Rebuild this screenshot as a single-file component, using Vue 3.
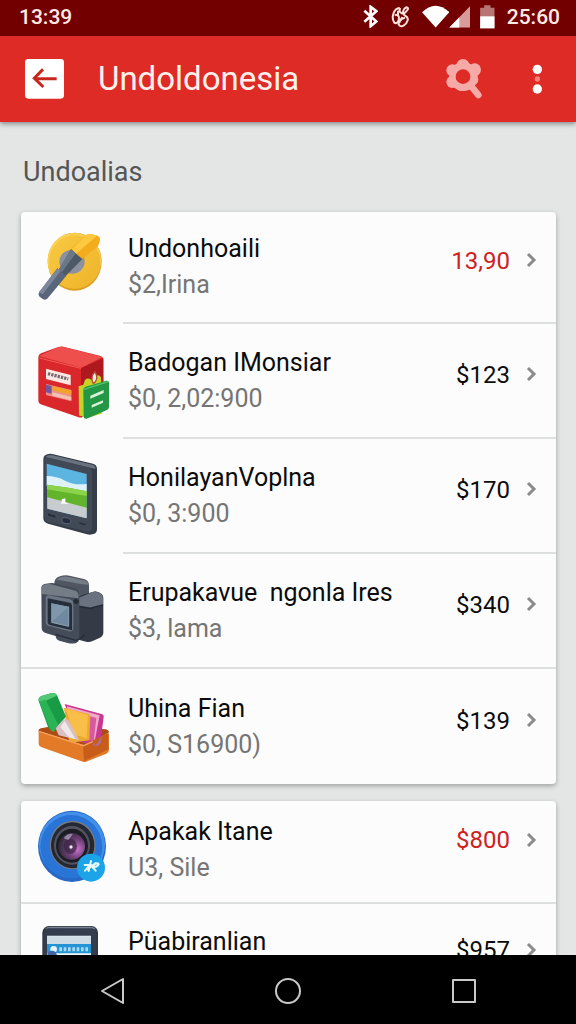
<template>
  <div class="screen">
    <div class="status-bar">
      <span class="clock">13:39</span>
      <div class="status-icons">
        <svg class="bluetooth" viewBox="234 14 45 68" width="15" height="23">
          <path d="M238 31l36 32-17 14V19l17 13-36 32" fill="none" stroke="#fff" stroke-width="8" />
        </svg>
        <svg class="sync" viewBox="318 14 57 66" width="19" height="22">
          <g fill="none" stroke="#ffe3df" stroke-width="6">
            <path d="M344 20c-19 1-26 30-16 44 7 5 14-5 14-14s-8-12-12-7" />
            <path d="M346 20c-8 13 7 21 15 13s10-11 6-14-14 5-13 16 18 7 14 22-20 23-26 14 5-19 18-22" />
            <path d="M339 28v17M352 47l-10 18" />
          </g>
        </svg>
        <svg class="wifi" viewBox="408 14 81 68" width="27" height="23">
          <path d="M408 35q40-39 82 0l-41 46z" fill="#fff" />
        </svg>
        <svg class="signal" viewBox="489 14 63 68" width="21" height="23">
          <path d="M552 17v64h-62z" fill="#d99a9a" />
          <path d="M520 50v31h-30z" fill="#fff" />
        </svg>
        <svg class="battery" viewBox="582 12 44 72" width="15" height="24">
          <path d="M582 20h12v-7h19v7h12v62h-43z" fill="#b87575" />
          <path d="M582 46h43v36h-43z" fill="#fff" />
        </svg>
        <span class="clock">25:60</span>
      </div>
    </div>

    <header class="app-bar">
      <button class="icon-btn" aria-label="Back">
        <svg viewBox="75 177 117 120" width="39" height="40">
          <rect x="75" y="177" width="117" height="119" rx="10" fill="#fff" />
          <path d="M170 236h-65M129 208l-26 27 27 26" fill="none" stroke="#c9251f" stroke-width="9" />
        </svg>
      </button>
      <h1>Undoldonesia</h1>
      <button class="icon-btn search" aria-label="Search">
        <svg viewBox="474 176 111 120" width="37" height="40">
          <g fill="#f6aaa7">
            <circle cx="526" cy="229" r="43" />
            <circle cx="525" cy="196" r="20" />
            <circle cx="560" cy="208" r="19" />
            <circle cx="493" cy="210" r="18" />
            <circle cx="493" cy="245" r="18" />
            <circle cx="520" cy="256" r="16" />
            <circle cx="554" cy="238" r="17" />
          </g>
          <path d="M546 253l25 31" stroke="#f6aaa7" stroke-width="20" stroke-linecap="round" />
          <circle cx="525" cy="229" r="22" fill="#de2b26" />
        </svg>
      </button>
      <button class="icon-btn" aria-label="More options">
        <svg viewBox="732 192 33 90" width="11" height="30">
          <circle cx="748" cy="208" r="14" fill="#fff" />
          <circle cx="748" cy="237" r="8" fill="#f8807c" />
          <circle cx="748" cy="267" r="14" fill="#fff" />
        </svg>
      </button>
    </header>

    <main class="content">
      <h2>Undoalias</h2>
      <section v-for="(card, index) in cards" :key="index" class="card">
        <a
          v-for="item in card"
          :key="item.title"
          href="#"
          class="row"
          :class="{ full: item.full }"
        >
          <svg class="thumb" viewBox="42 36 240 264" width="80" height="88" aria-hidden="true">
            <g v-if="item.icon === 'disc'" transform="translate(0 -3)">
              <ellipse cx="164" cy="152" rx="81" ry="87" fill="#dca01e" />
              <ellipse cx="163" cy="149" rx="80" ry="83" fill="#fbd255" />
              <ellipse cx="164" cy="153" rx="77" ry="80" fill="url(#gold)" />
              <ellipse cx="156" cy="152" rx="38" ry="36" fill="#8b919e" />
              <path d="M149 118l46-44q7-7 20-4l18 4q10 5 6 18l-5 14-52 42z" fill="#f3ac1c" />
              <path d="M156 114l42-41q7-6 19-3l14 4-47 41-16 14z" fill="#ffc93f" />
              <path d="M153 115l34 29-53 54-20-18z" fill="#4d5966" />
              <path d="M153 115l14 12-43 59-10-6z" fill="#6c7885" />
              <path d="M112 172l27 22-56 68q-6 7-15 2l-9-7q-6-6-1-14z" fill="#59657a" />
              <path d="M112 172l10 8-54 70-11-6z" fill="#7c879b" />
            </g>

            <g v-else-if="item.icon === 'box'">
              <path d="M55 94q0-9 8-12l52-19q8-3 15-1l112 28q8 3 8 11v120l-63 52q-4 3-11 1L62 235q-7-3-7-11z" fill="#d9272c" />
              <path d="M183 126l67-29v125l-67 52z" fill="#b01820" />
              <path d="M57 90l58-26q8-3 15-1l118 30-64 32z" fill="#ef4f4c" />
              <path d="M58 96l125 31" stroke="#f25b55" stroke-width="3" />
              <path d="M78 128l74 19v31l-74-19z" fill="#fbe9e4" />
              <path d="M84 143l61 16" stroke="#796973" stroke-width="10" stroke-dasharray="7 3" />
              <path d="M78 174l76 18v34l-76-19z" fill="#ef9088" />
              <path d="M97 180l57 13v14l-57-14z" fill="#f3a22c" />
              <path d="M78 176l17 4v23l-17-4z" fill="#74549b" />
              <path d="M97 199l57 14v10l-57-14z" fill="#f4c2b0" />
              <path d="M176 181l14-5 5-14q7-7 15-3l10 7 13-18q9 0 10 9l1 16 16 10-15 80-45 13-23-8z" fill="#c5d326" />
              <path d="M219 171c-7-16-2-26 6-34 8 14 8 24-2 34z" fill="#eef3e6" stroke="#b64b35" stroke-width="4" />
              <path d="M190 190q1-6 7-8l62-18q8-1 8 7v72q0 6-6 9l-61 26q-8 2-9-6z" fill="#239744" />
              <path d="M190 191l74-24" stroke="#57c568" stroke-width="4" />
              <path d="M211 209l40-17v9l-40 17zM215 237l34-14v7l-34 15z" fill="#d8f1d9" />
            </g>

            <g v-else-if="item.icon === 'phone'">
              <path d="M70 56q0-13 12-16 9-3 18 0l119 28q12 3 12 16v181q0 13-14 15-8 2-16 0L84 248q-14-4-14-16z" fill="#343b49" />
              <path d="M76 49q6-10 22-6l120 28q10 4 8 13z" fill="#697281" />
              <path d="M73 57q2-10 15-7l116 29q13 4 13 17v161q0 14-13 16L84 243q-11-4-11-15z" fill="#414957" />
              <path d="M80 68l120 31v133L82 203z" fill="#5cb5e1" />
              <path d="M80 105q30 0 55 14t65 10v30L80 135z" fill="#dff2fa" />
              <path d="M81 131q60 7 119 20v60L82 181z" fill="#62b52a" />
              <path d="M81 131q60 7 119 20v14q-60-10-119-20z" fill="#8bd348" />
              <path d="M82 169q60 16 118 31v32L82 203z" fill="#c7cdcf" />
              <path d="M125 182v-7l11-3v12l11 4h-24z" fill="#fff" />
              <ellipse cx="139" cy="239" rx="14" ry="9" fill="#242d3d" stroke="#697383" stroke-width="2" transform="rotate(12 139 239)" />
              <path d="M84 217l22 7v6l-22-6z" fill="#262e3c" />
              <path d="M178 246l19 5" stroke="#293241" stroke-width="5" />
            </g>

            <g v-else-if="item.icon === 'camera'">
              <path d="M103 84q0-15 17-20 14-5 29-2l45 11q13 4 13 19v35l-104-20z" fill="#505762" />
              <path d="M109 77q11-16 39-11l48 11q9 3 9 12l-18-1-70-13z" fill="#757d87" />
              <path d="M165 125l61-16q24 5 24 19v105q0 9-10 15l-24 11q-8 4-18 1l-33-9z" fill="#343b47" />
              <path d="M174 130l46-20q29 0 29 21v20l-42 10-33-7z" fill="#69727e" />
              <path d="M176 154l35 6 38-10" fill="none" stroke="#252c37" stroke-width="5" />
              <path d="M64 97q1-8 9-10l15-2q10-2 21 1l57 14q12 4 12 16v134q-1 12-12 15-11 2-23-1l-25-7q-10-3-11-14l-28-8q-14-4-14-17z" fill="#454c59" />
              <path d="M65 96q4-10 25-9l76 20q12 4 9 23l-109-13z" fill="#747c86" />
              <path d="M77 129q1-9 11-8l61 12q10 2 11 12v74q-1 12-12 10l-61-16q-10-3-10-12z" fill="#6b7482" />
              <path d="M83 130l67 13q6 1 6 9v74l-63-15q-10-2-10-10z" fill="#252e3b" />
              <path d="M94 145l52 10v59l-52-12z" fill="#7189a0" />
              <path d="M94 145l52 10-52 47z" fill="#7f97ab" />
              <path d="M94 202l52 12M146 155v59" stroke="#8fa3b2" stroke-width="3" />
              <circle cx="168" cy="139" r="8" fill="#262b34" />
              <path d="M106 238l61 18q17-4 27-18" fill="none" stroke="#262d38" stroke-width="4" />
            </g>

            <g v-else-if="item.icon === 'tray'">
              <path d="M55 181q0-7 8-9l41-8 153 11q10 3 10 9l-69 43z" fill="#ad4b15" />
              <path d="M134 99l113 31q5 2 4 8l-12 91-62-18z" fill="#c83791" />
              <path d="M141 106l98 27-15 78-76-30z" fill="#f1a9c9" />
              <path d="M143 116l86 25-8 71-73-24z" fill="#d65a9d" />
              <path d="M132 110l74 19q6 3 5 10l-3 69-60 8z" fill="#eba92e" />
              <path d="M136 112l68 20-4 69-36-10z" fill="#f9be48" />
              <path d="M56 90q-3-9 8-15l31-9q13-2 17 9l26 62-36 41q-13 2-18-10z" fill="#199b46" />
              <path d="M57 89q-2-9 9-14l30-9q13-1 14 8l-39 18z" fill="#53c875" />
              <path d="M57 91l20-5 38 77-14 20q-8-2-11-10z" fill="#2bb456" />
              <path d="M107 172l23-26q10-5 17 4l30 58-61-15z" fill="#d7c1c7" />
              <path d="M121 168l13-18 33 55-20-6z" fill="#f2e7e8" />
              <path d="M56 180l137 43 26-11 13 17 32-43q4 2 3 8v42q0 8-8 12l-61 24q-7 2-14-1L65 229q-9-4-9-11z" fill="#e37a28" />
              <path d="M189 222l76-36v49l-73 36z" fill="#c85c19" />
              <path d="M57 181l134 43 28-13" fill="none" stroke="#f6a25d" stroke-width="4" />
              <path d="M215 209l12 15 21-32-6 25q-11 14-22 5z" fill="#b06a9d" />
            </g>

            <g v-else-if="item.icon === 'lens'">
              <ellipse cx="156" cy="151" rx="102" ry="107" fill="#2668c4" />
              <ellipse cx="156" cy="146" rx="99" ry="99" fill="#4390eb" />
              <ellipse cx="154" cy="152" rx="93" ry="95" fill="#2874d7" />
              <ellipse cx="158" cy="147" rx="69" ry="73" fill="#747985" />
              <ellipse cx="158" cy="148" rx="65" ry="69" fill="#252831" />
              <ellipse cx="156" cy="148" rx="54" ry="58" fill="#525460" />
              <ellipse cx="156" cy="149" rx="48" ry="51" fill="#1c1c25" />
              <circle cx="155" cy="151" r="40" fill="url(#glass)" />
              <ellipse cx="151" cy="151" rx="20" ry="23" fill="#372441" opacity="0.7" />
              <path d="M131 127q12-16 28-13l-14 18z" fill="#b6abc3" opacity="0.7" />
              <circle cx="153" cy="153" r="5" fill="#f4e4f7" />
              <circle cx="213" cy="215" r="42" fill="#1ba5e8" />
              <path d="M194 207h16l-15 17m8-4l24-19m-21 24l7-30m6 13q13-10 17-3-6 10-18 8m0 1l9 10" fill="none" stroke="#e9faff" stroke-width="6" stroke-linecap="round" />
            </g>

            <g v-else transform="translate(0 -12)">
              <rect x="67" y="78" width="167" height="220" rx="20" fill="#303745" />
              <path d="M75 86q6-6 17-6h117q14 0 18 8z" fill="#788391" />
              <rect x="72" y="85" width="156" height="210" rx="15" fill="#343d4d" />
              <path d="M81 107h132v150H81z" fill="#f3f8fb" />
              <path d="M81 109h132v24H81z" fill="#cfdce6" />
              <path d="M81 132h132v28H81z" fill="#2594d4" />
              <path d="M118 148h91" stroke="#a8daf4" stroke-width="12" stroke-dasharray="8 5" />
              <circle cx="101" cy="148" r="10" fill="#e3f4fc" />
              <path d="M82 162q5-12 20-9 9 4 9 16H82z" fill="#4563a2" />
            </g>
          </svg>

          <div class="row-body">
            <div class="texts">
              <span class="title">{{ item.title }}</span>
              <span class="detail">{{ item.detail }}</span>
            </div>
            <span class="price" :class="{ red: item.red }">{{ item.price }}</span>
            <svg class="chevron" viewBox="0 0 11 16" width="11" height="16">
              <path d="M2 2l6 6-6 6" fill="none" stroke="#8b8b8b" stroke-width="3" />
            </svg>
          </div>
        </a>
      </section>
    </main>

    <nav class="nav-bar">
      <button aria-label="Back">
        <svg viewBox="0 0 28 28" width="28" height="28">
          <path d="M4 14L25 2v24z" />
        </svg>
      </button>
      <button aria-label="Home">
        <svg viewBox="0 0 28 28" width="28" height="28">
          <circle cx="14" cy="14" r="12" />
        </svg>
      </button>
      <button aria-label="Recent apps">
        <svg viewBox="0 0 28 28" width="28" height="28">
          <rect x="3" y="3" width="22" height="22" />
        </svg>
      </button>
    </nav>

    <!-- shared gradients -->
    <svg class="defs" width="0" height="0" aria-hidden="true">
      <defs>
        <linearGradient id="gold" x1="0" y1="0" x2="1" y2="1">
          <stop offset="0" stop-color="#f8ca43" />
          <stop offset="1" stop-color="#efb329" />
        </linearGradient>
        <radialGradient id="glass" cx="0.7" cy="0.6" r="0.7">
          <stop offset="0" stop-color="#cb72cf" />
          <stop offset="0.5" stop-color="#704179" />
          <stop offset="1" stop-color="#302a3b" />
        </radialGradient>
      </defs>
    </svg>
  </div>
</template>

<script setup>
import { ref } from "vue";

const cards = ref([
  [
    { icon: "disc", title: "Undonhoaili", detail: "$2,Irina", price: "13,90", red: true },
    { icon: "box", title: "Badogan IMonsiar", detail: "$0, 2,02:900", price: "$123" },
    { icon: "phone", title: "HonilayanVoplna", detail: "$0, 3:900", price: "$170" },
    { icon: "camera", title: "Erupakavue  ngonla Ires", detail: "$3, lama", price: "$340", full: true },
    { icon: "tray", title: "Uhina Fian", detail: "$0, S16900)", price: "$139" },
  ],
  [
    { icon: "lens", title: "Apakak Itane", detail: "U3, Sile", price: "$800", red: true, full: true },
    { icon: "tablet", title: "Püabiranlian", detail: "", price: "$957" },
  ],
]);
</script>

<style>
body {
  margin: 0;
}
</style>

<style scoped>
* {
  box-sizing: border-box;
}

.screen {
  display: flex;
  flex-direction: column;
  height: 100vh;
  overflow: hidden;
  background: #e4e6e6;
  font-family: Roboto, "Liberation Sans", sans-serif;
}

svg {
  display: block;
  flex-shrink: 0;
}

button {
  padding: 0;
  border: none;
  background: none;
  cursor: pointer;
}

.status-bar {
  display: flex;
  flex-shrink: 0;
  align-items: center;
  justify-content: space-between;
  height: 36px;
  padding: 0 16px 3px 19px;
  background: #730001;
}

.status-icons {
  display: flex;
  align-items: center;
}

.sync {
  margin: 0 12px 0 13px;
}

.battery {
  margin: 0 12px 0 10px;
}

.clock {
  color: #ffeae5;
  font-size: 21px;
  font-weight: 500;
  line-height: 24px;
}

.app-bar {
  display: flex;
  flex-shrink: 0;
  align-items: center;
  height: 86px;
  padding: 0 33px 0 25px;
  background: #de2b26;
  box-shadow: 0 2px 5px rgba(0, 0, 0, 0.4);
  z-index: 1;
}

.app-bar h1 {
  flex: 1;
  margin: 0 0 0 34px;
  color: #fff0ec;
  font-size: 33px;
  font-weight: 400;
  line-height: 40px;
}

.search {
  margin-right: 49px;
}

.content {
  flex: 1;
  min-height: 0;
  padding: 0 20px 0 21px;
  overflow-y: auto;
  scrollbar-width: none;
}

.content h2 {
  margin: 0;
  padding: 34px 2px 24px;
  color: #555;
  font-size: 27px;
  font-weight: 400;
  line-height: 32px;
}

.card {
  margin-bottom: 17px;
  overflow: hidden;
  border-radius: 4px;
  background: #fcfcfc;
  box-shadow: 0 2px 5px rgba(0, 0, 0, 0.3);
}

.row {
  display: flex;
  align-items: center;
  height: 115px;
  padding-left: 13px;
  color: #0c0c0c;
  text-decoration: none;
}

.row:first-child {
  height: 112px;
}

.card:last-child .row {
  height: 111px;
}

.card:last-child .row:first-child {
  height: 103px;
}

.row-body {
  display: flex;
  flex: 1;
  align-items: center;
  align-self: stretch;
  min-width: 0;
  margin-left: 9px;
  padding: 0 19px 0 5px;
  border-bottom: 2px solid #dedfdf;
}

.row.full {
  border-bottom: 2px solid #dedfdf;
}

.row.full .row-body,
.row:last-child .row-body {
  border-bottom: none;
}

/* the short row sits a little higher than the others */
.row.full:first-child .row-body {
  padding-bottom: 4px;
}

.texts {
  flex: 1;
  min-width: 0;
}

.title,
.detail {
  display: block;
  min-height: 36px;
  font-size: 25px;
  line-height: 36px;
  white-space: pre;
}

.detail {
  color: #757575;
}

.price {
  padding-bottom: 12px;
  font-size: 24px;
  line-height: 28px;
}

.price.red {
  color: #cf211d;
}

.chevron {
  margin: 0 0 14px 16px;
}

.card:last-child .price {
  padding-bottom: 20px;
}

.card:last-child .chevron {
  margin-bottom: 20px;
}

.nav-bar {
  display: grid;
  flex-shrink: 0;
  grid-template-columns: repeat(3, 1fr);
  height: 69px;
  padding: 3px 24px 0;
  background: #000;
  z-index: 1;
}

.nav-bar button {
  display: flex;
  align-items: center;
  justify-content: center;
}

.nav-bar svg {
  fill: none;
  stroke: #c9c9c9;
  stroke-width: 2;
  stroke-linejoin: round;
}

.defs {
  position: absolute;
}
</style>
